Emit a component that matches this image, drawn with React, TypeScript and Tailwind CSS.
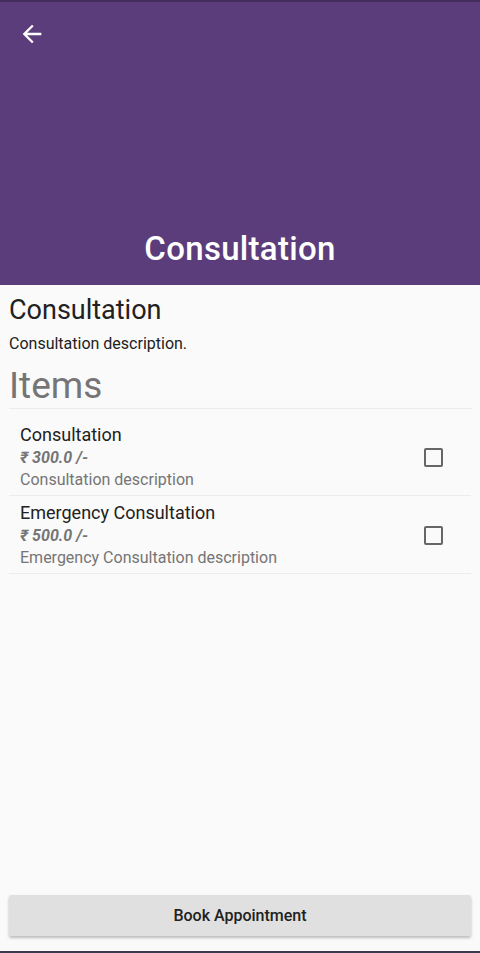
const items = [
  { name: 'Consultation', price: '300.0', desc: 'Consultation description' },
  { name: 'Emergency Consultation', price: '500.0', desc: 'Emergency Consultation description' },
]

export default function App() {
  return (
    <div
      className="h-[953px] w-[480px] flex flex-col bg-[#fafafa] overflow-hidden"
      style={{ fontFamily: 'Roboto, "Noto Sans", sans-serif' }}
    >
      {/* ── App bar ── */}
      <div className="h-[2px] bg-[#432c5e]" />
      <div className="h-[283px] bg-[#5c3d7b] flex flex-col">
        <div className="h-[60px] flex items-center pl-[18px] pt-[4px]">
          <svg viewBox="0 0 24 24" className="w-[28px] h-[28px]" fill="#fff">
            <path d="M20 11H7.83l5.59-5.59L12 4l-8 8 8 8 1.41-1.41L7.83 13H20v-2z" />
          </svg>
        </div>
        <div className="flex-1 flex items-end justify-center pb-[16px]">
          <h1 className="text-[33px] leading-[40px] font-medium text-white tracking-[0.3px]">Consultation</h1>
        </div>
      </div>

      {/* ── Body ── */}
      <div className="flex-1 flex flex-col px-[9px]">
        <h2 className="text-[27px] leading-[32px] text-[#212121] mt-[9px]">Consultation</h2>
        <p className="text-[16px] leading-[20px] text-[#212121] mt-[8px]">Consultation description.</p>
        <h3 className="text-[37px] leading-[44px] text-[#757575] mt-[10px]">Items</h3>
        <div className="border-b border-[#ececec] mr-[-1px]" />

        <div className="mt-[9px]">
          {items.map((item) => (
            <div key={item.name} className="flex items-center border-b border-[#ececec] pt-[5px] pb-[4px] pl-[11px] pr-[28px]">
              <div className="flex-1 flex flex-col">
                <span className="text-[18px] leading-[24px] text-[#212121]">{item.name}</span>
                <span className="text-[16px] leading-[22px] font-bold italic text-[#757575]">
                  ₹ {item.price} /-
                </span>
                <span className="text-[16px] leading-[22px] text-[#757575]">{item.desc}</span>
              </div>
              <div className="w-[19px] h-[19px] border-2 border-[#666] rounded-[2px]" />
            </div>
          ))}
        </div>

        <div className="flex-1" />

        <button className="h-[41px] mb-[15px] bg-[#e0e0e0] rounded-[2px] shadow-[0_2px_3px_rgba(0,0,0,0.25)] text-[16px] font-medium text-[#212121]">
          Book Appointment
        </button>
      </div>
      <div className="h-[2px] bg-[#3b3b4f]" />
    </div>
  )
}
